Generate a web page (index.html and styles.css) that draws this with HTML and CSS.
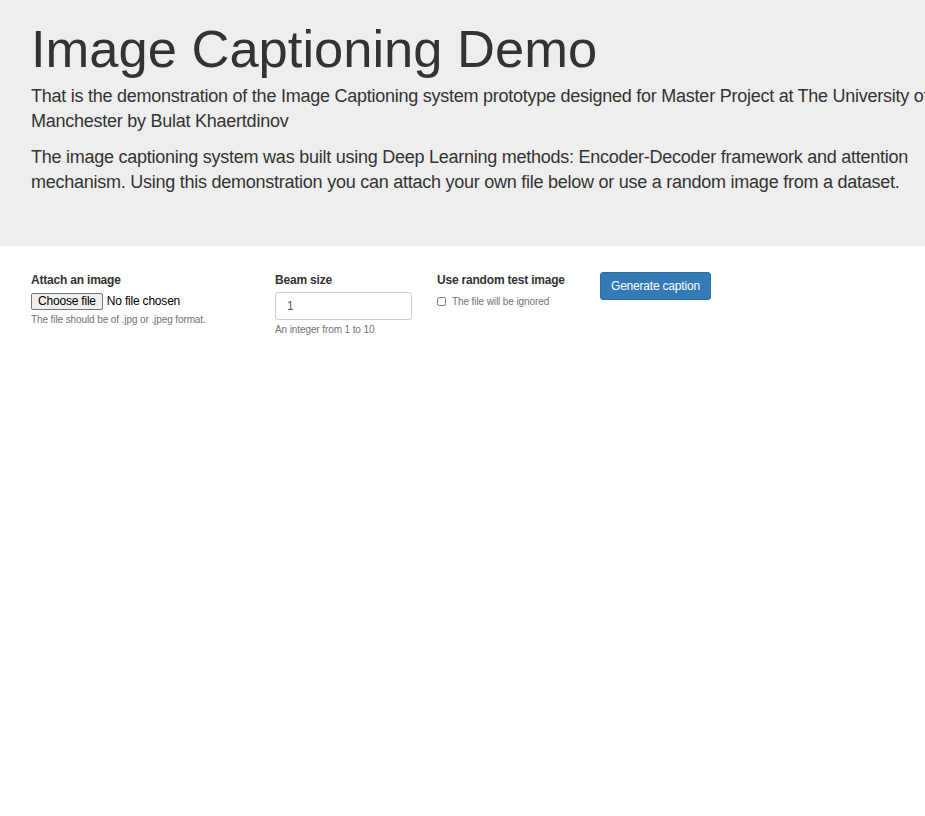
FILE: index.html
```html
<!DOCTYPE html>
<html>
<head>
<meta charset="utf-8">
<link rel="stylesheet" href="styles.css">
</head>
<body>
<div class="jumbotron">
  <h1 class="title">Image Captioning Demo</h1>
  <p class="lead">That is the demonstration of the Image Captioning system prototype designed for Master Project at The University of Manchester by Bulat Khaertdinov</p>
  <p class="lead">The image captioning system was built using Deep Learning methods: Encoder-Decoder framework and attention mechanism. Using this demonstration you can attach your own file below or use a random image from a dataset.</p>
</div>
<form class="form-row">
  <div class="group g-file">
    <label class="lbl">Attach an image</label>
    <div class="file-line"><span class="file-btn">Choose file</span><span class="file-name">No file chosen</span></div>
    <div class="help">The file should be of .jpg or .jpeg format.</div>
  </div>
  <div class="group g-beam">
    <label class="lbl">Beam size</label>
    <input class="num" type="text" value="1">
    <div class="help">An integer from 1 to 10</div>
  </div>
  <div class="group g-rand">
    <label class="lbl">Use random test image</label>
    <div class="check-line"><input type="checkbox" class="chk"><span class="help">The file will be ignored</span></div>
  </div>
  <div class="group g-btn">
    <button type="button" class="btn">Generate caption</button>
  </div>
</form>
</body>
</html>
```
FILE: styles.css
```css
html, body { margin: 0; padding: 0; background: #fff; }
body { font-family: "Liberation Sans", Arial, sans-serif; color: #333; width: 925px; overflow: hidden; }
.jumbotron { background: #eee; height: 246px; box-sizing: border-box; padding: 18px 0 0 31px; }
.title { font-size: 52.5px; font-weight: 400; margin: 0 0 4px; line-height: 62px; color: #333; white-space: nowrap; }
.lead { font-size: 18px; line-height: 25px; margin: 0 0 11px; width: 912px; letter-spacing: -0.25px; }
.form-row { display: flex; padding: 26px 0 0 31px; align-items: flex-start; }
.group { display: flex; flex-direction: column; }
.g-file { width: 244px; }
.g-beam { width: 162px; }
.g-rand { width: 163px; }
.lbl { font-size: 12px; font-weight: bold; line-height: 16px; margin-bottom: 4px; color: #333; letter-spacing: -0.2px; }
.file-line { display: flex; align-items: center; font-size: 12px; height: 18px; letter-spacing: -0.2px; }
.file-btn { border: 1px solid #767676; background: #efefef; border-radius: 2px; padding: 0 6px; line-height: 15px; color: #000; margin-right: 4px; }
.file-name { color: #000; }
.help { font-size: 10px; color: #737373; margin-top: 4px; letter-spacing: -0.1px; }
.num { width: 137px; height: 28px; box-sizing: border-box; border: 1px solid #ccc; border-radius: 3px; padding: 0 11px; font-size: 12px; font-family: inherit; color: #555; }
.check-line { display: flex; align-items: center; margin-top: 4px; }
.chk { width: 9px; height: 9px; margin: 0 6px 0 0; }
.check-line .help { margin-top: 0; }
.btn { background: #337ab7; border: 1px solid #2e6da4; color: #fff; border-radius: 3px; font-size: 12px; font-family: inherit; height: 28px; padding: 0 10px; margin-top: 0; letter-spacing: -0.2px; }
```
